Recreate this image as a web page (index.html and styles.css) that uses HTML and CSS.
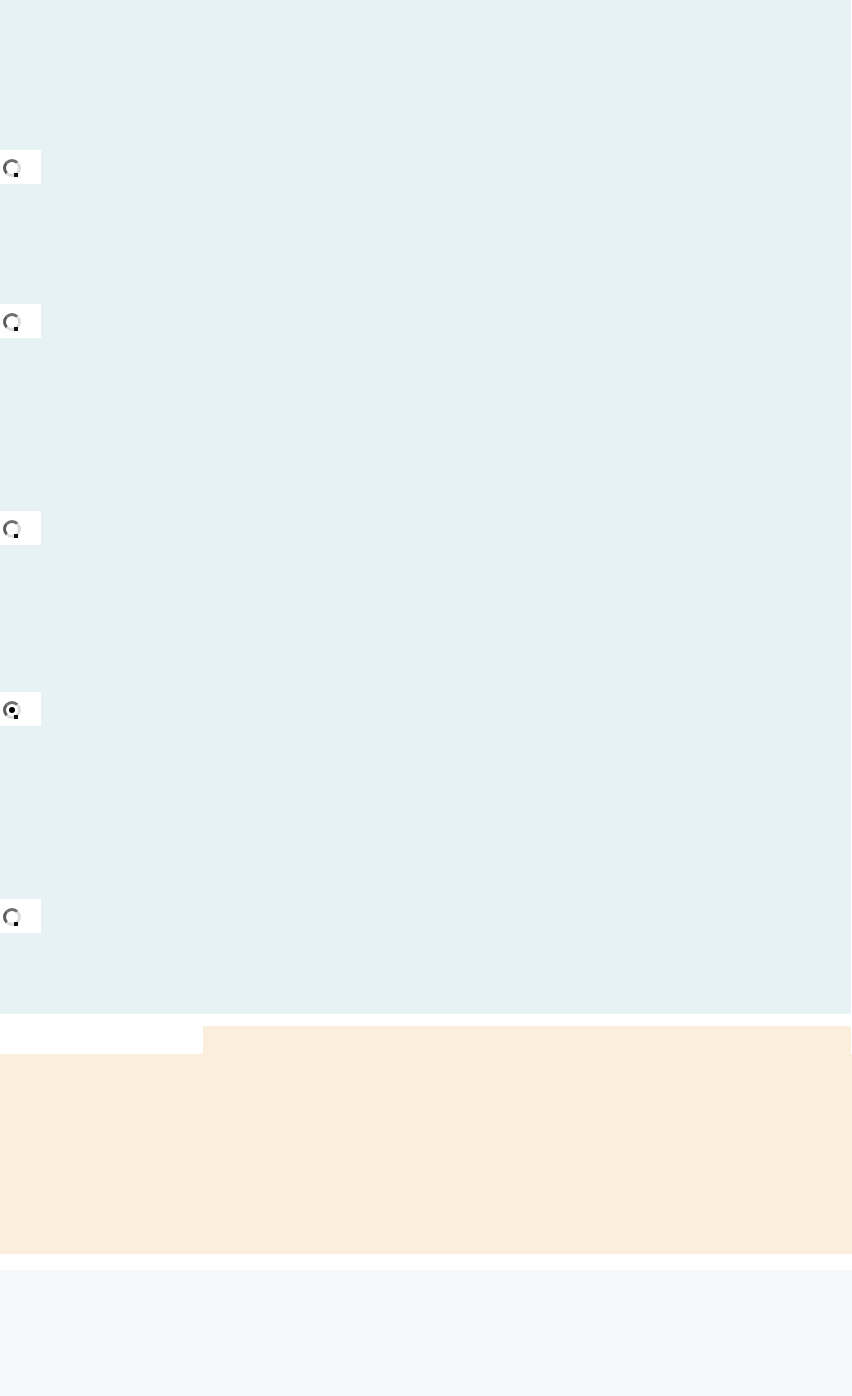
FILE: index.html
```html
<!DOCTYPE html>
<html lang="en">
<head>
    <meta charset="UTF-8">
    <meta name="viewport" content="width=device-width, initial-scale=1.0">
    <title>Quiz</title>
    <link rel="stylesheet" href="styles.css">
</head>
<body>

<div class="quiz">
    <div class="option gap-a">
        <span class="choice"><span class="radio"></span></span>
    </div>
    <div class="option gap-b">
        <span class="choice"><span class="radio"></span></span>
    </div>
    <div class="option gap-c">
        <span class="choice"><span class="radio"></span></span>
    </div>
    <div class="option gap-b">
        <span class="choice"><span class="radio checked"></span></span>
    </div>
    <div class="option gap-last">
        <span class="choice"><span class="radio"></span></span>
    </div>
</div>

<div class="notes">
    <div class="notes-head">
        <div class="notes-spacer"></div>
        <div class="notes-tab"></div>
    </div>
    <div class="notes-body"></div>
</div>

<div class="footer"></div>

</body>
</html>
```

FILE: styles.css
```css
/* Simple page blocks */
body {
    font-family: "Liberation Sans", Arial, sans-serif;
    margin: 0;
    background: #ffffff;
}
.quiz {
    background: #e7f2f4;
    width: 851px;
    height: 1014px;
    padding-top: 150px;
    box-sizing: border-box;
}
.option {
    display: flex;
}
.gap-a {
    margin-bottom: 120px;
}
.gap-b {
    margin-bottom: 173px;
}
.gap-c {
    margin-bottom: 147px;
}
.choice {
    display: flex;
    align-items: center;
    width: 41px;
    height: 34px;
    background: #ffffff;
    padding-left: 3px;
    box-sizing: border-box;
}
.radio {
    position: relative;
    flex: none;
    width: 18px;
    height: 18px;
    margin-top: 1px;
    border-radius: 50%;
    border: 3px solid;
    border-color: #6e6e6e #dcdcdc #dcdcdc #5c5c5c;
    box-sizing: border-box;
    background: #ffffff;
}
.radio::after {
    content: "";
    position: absolute;
    right: 0;
    bottom: -3px;
    width: 4px;
    height: 4px;
    background: #111111;
}
.radio.checked::before {
    content: "";
    position: absolute;
    left: 3px;
    top: 3px;
    width: 6px;
    height: 6px;
    border-radius: 50%;
    background: #000000;
}
.notes {
    margin-top: 12px;
}
.notes-head {
    display: flex;
    height: 28px;
}
.notes-spacer {
    width: 203px;
}
.notes-tab {
    width: 648px;
    background: #fbeedc;
}
.notes-body {
    height: 200px;
    background: #fbeedc;
}
.footer {
    margin-top: 16px;
    height: 126px;
    background: #f7f8fa;
}
```
